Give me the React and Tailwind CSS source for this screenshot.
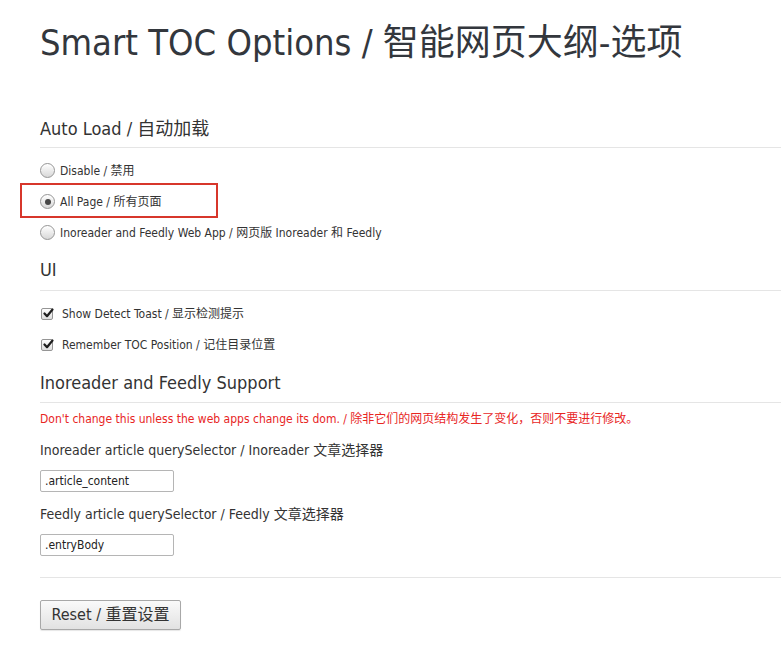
import React from "react";

const FONT = "font-['DejaVu_Sans_Condensed','DejaVu_Sans','Noto_Sans_CJK_SC',sans-serif] font-stretch-condensed";

function Radio({ checked }) {
  return (
    <span className="relative inline-block w-[15px] h-[15px] shrink-0 rounded-full border border-[#959595] bg-gradient-to-b from-[#ffffff] to-[#d8d8d8] shadow-[inset_0_1px_1px_rgba(255,255,255,0.8)]">
      {checked && (
        <span className="absolute left-[3.5px] top-[3.5px] w-[6px] h-[6px] rounded-full bg-[#474747]" />
      )}
    </span>
  );
}

function Checkbox() {
  return (
    <span className="relative inline-block w-[12px] h-[12px] shrink-0 rounded-[2px] border border-[#959595] bg-gradient-to-b from-[#ffffff] to-[#dedede]">
      <svg className="absolute left-[1px] top-[-1px]" width="11" height="11" viewBox="0 0 11 11">
        <path d="M1.5 5.5 L4 8.2 L9.5 1.5" fill="none" stroke="#1e1e1e" strokeWidth="2.2" strokeLinecap="round" strokeLinejoin="round" />
      </svg>
    </span>
  );
}

export default function App() {
  return (
    <div className={`${FONT} bg-white text-[#333] min-h-[648px] pl-10 pb-10`}>
      <h1 className="pt-[23px] h-[63px] leading-[40px] text-[36px] text-[#33373d] whitespace-nowrap">
        Smart TOC Options / 智能网页大纲-选项
      </h1>

      <div className="mt-[55px] pb-[7px] border-b border-[#e5e5e5]">
        <div className="h-[22px] leading-[22px] text-[18px] text-[#333]">Auto Load / 自动加载</div>
      </div>

      <div className="mt-[7px]">
        <div className="h-[31px] flex items-center gap-[5px] text-[12px]">
          <Radio />
          <span>Disable / 禁用</span>
        </div>
        <div className="relative h-[31px] flex items-center gap-[5px] text-[12px]">
          <div className="absolute left-[-20px] top-[-3px] w-[198px] h-[35px] border-2 border-[#d7362b]" />
          <Radio checked />
          <span>All Page / 所有页面</span>
        </div>
        <div className="h-[31px] flex items-center gap-[5px] text-[12px] whitespace-nowrap">
          <Radio />
          <span>Inoreader and Feedly Web App / 网页版 Inoreader 和 Feedly</span>
        </div>
      </div>

      <div className="mt-[11px] pb-[9px] border-b border-[#e5e5e5]">
        <div className="h-[22px] leading-[22px] text-[18px] text-[#333]">UI</div>
      </div>

      <div className="mt-[7px]">
        <div className="h-[31px] flex items-center gap-[9px] text-[12px] pl-[1px]">
          <Checkbox />
          <span>Show Detect Toast / 显示检测提示</span>
        </div>
        <div className="h-[31px] flex items-center gap-[9px] text-[12px] pl-[1px]">
          <Checkbox />
          <span>Remember TOC Position / 记住目录位置</span>
        </div>
      </div>

      <div className="mt-[12px] pb-[8px] border-b border-[#e5e5e5]">
        <div className="h-[22px] leading-[22px] text-[18px] text-[#333]">Inoreader and Feedly Support</div>
      </div>

      <div className="mt-[6px] h-[20px] leading-[20px] text-[12px] text-[#e8261f] whitespace-nowrap">
        Don't change this unless the web apps change its dom. / 除非它们的网页结构发生了变化，否则不要进行修改。
      </div>

      <div className="mt-[11px] h-[20px] leading-[20px] text-[14px] whitespace-nowrap">
        Inoreader article querySelector / Inoreader 文章选择器
      </div>
      <input
        readOnly
        value=".article_content"
        className={`${FONT} block mt-[10px] w-[134px] h-[22px] px-[4px] text-[12px] text-[#222] border border-[#b5b5b5] rounded-[2px] outline-none`}
      />

      <div className="mt-[12px] h-[20px] leading-[20px] text-[14px] whitespace-nowrap">
        Feedly article querySelector / Feedly 文章选择器
      </div>
      <input
        readOnly
        value=".entryBody"
        className={`${FONT} block mt-[10px] w-[134px] h-[22px] px-[4px] text-[12px] text-[#222] border border-[#b5b5b5] rounded-[2px] outline-none`}
      />

      <div className="mt-[21px] border-t border-[#e5e5e5]" />

      <button className={`${FONT} block mt-[22px] w-[141px] h-[30px] text-[16px] text-[#333] border border-[#a8a8a8] rounded-[2px] bg-gradient-to-b from-[#fafafa] to-[#e2e2e2] shadow-[0_1px_1px_rgba(0,0,0,0.1)]`}>
        Reset / 重置设置
      </button>
    </div>
  );
}
